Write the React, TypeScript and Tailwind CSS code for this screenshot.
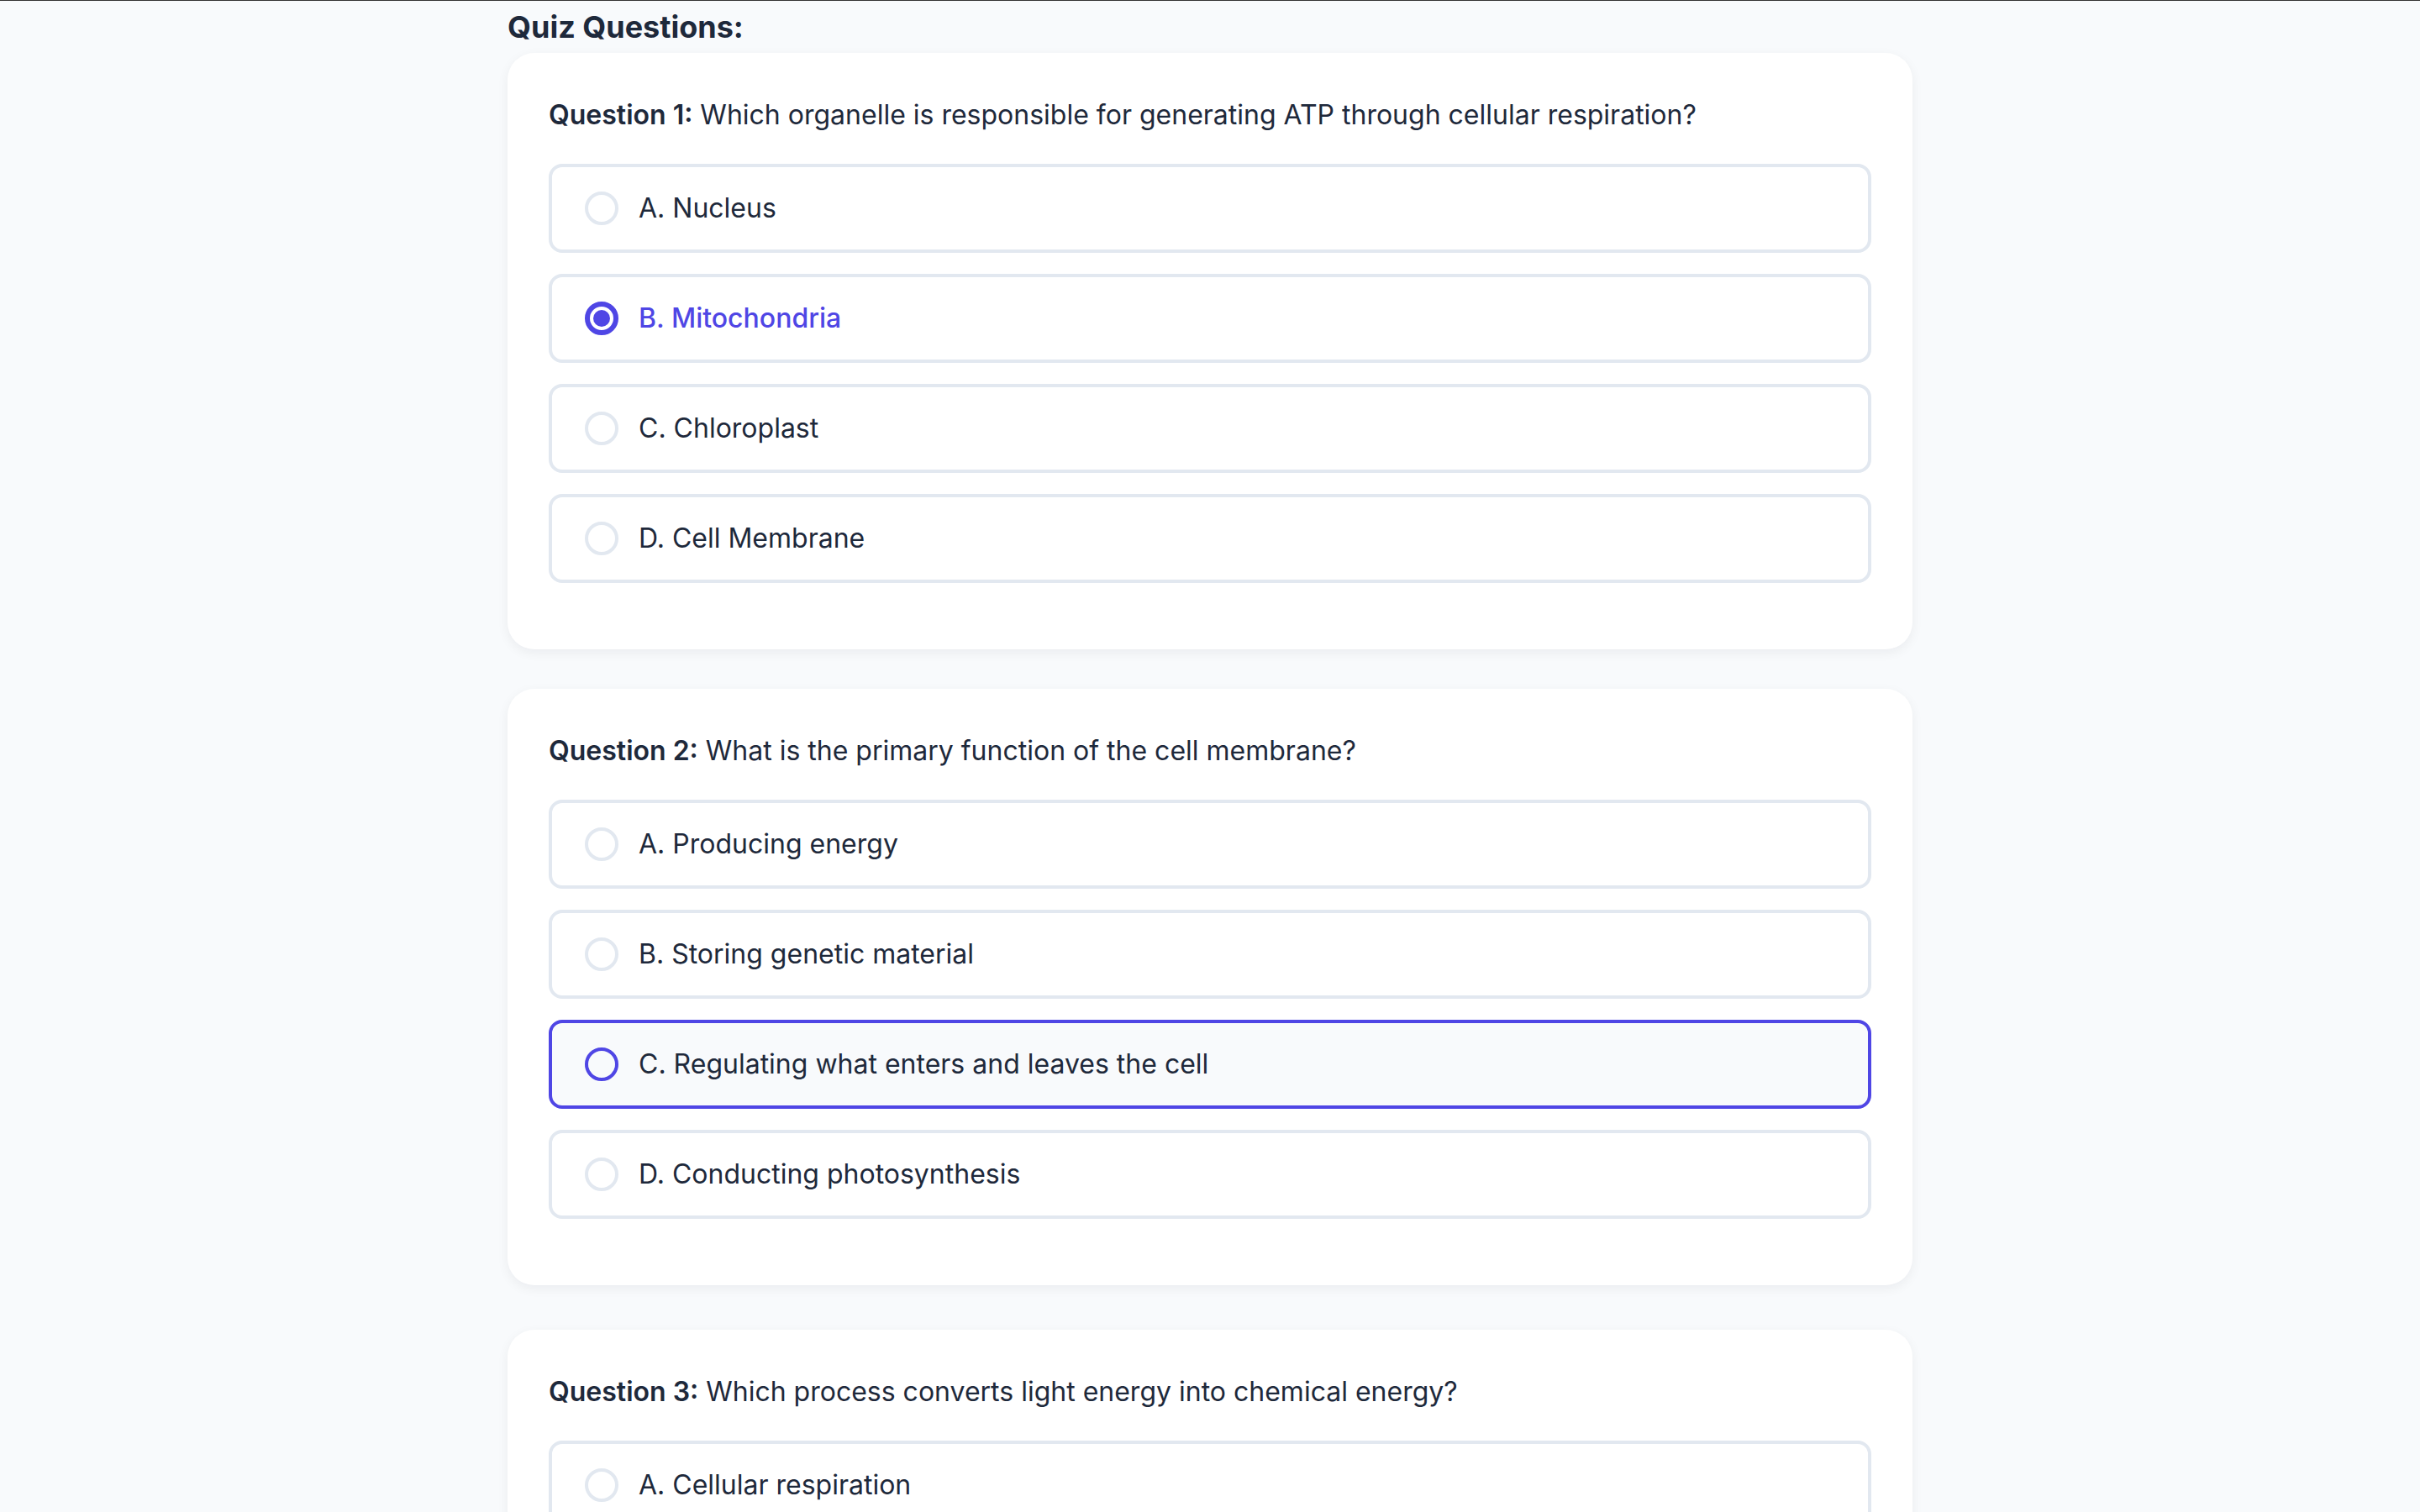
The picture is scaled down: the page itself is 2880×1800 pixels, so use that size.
import { useState } from "react";

type Question = {
  id: number;
  text: string;
  options: string[];
};

const questions: Question[] = [
  {
    id: 1,
    text: "Which organelle is responsible for generating ATP through cellular respiration?",
    options: ["A. Nucleus", "B. Mitochondria", "C. Chloroplast", "D. Cell Membrane"],
  },
  {
    id: 2,
    text: "What is the primary function of the cell membrane?",
    options: [
      "A. Producing energy",
      "B. Storing genetic material",
      "C. Regulating what enters and leaves the cell",
      "D. Conducting photosynthesis",
    ],
  },
  {
    id: 3,
    text: "Which process converts light energy into chemical energy?",
    options: ["A. Cellular respiration", "B. Photosynthesis", "C. Fermentation", "D. Glycolysis"],
  },
];

// spacing below each card (taken from the screenshot)
const cardGaps = ["mb-[47px]", "mb-[53px]", "mb-[48px]"];

function RadioDot({ selected, focused }: { selected: boolean; focused: boolean }) {
  if (selected) {
    return (
      <div className="w-[40px] h-[40px] shrink-0 rounded-full border-[6px] border-[#4f46e5] flex items-center justify-center">
        <div className="w-[20px] h-[20px] rounded-full bg-[#4f46e5]" />
      </div>
    );
  }
  return (
    <div
      className={
        focused
          ? "w-[40px] h-[40px] shrink-0 rounded-full border-[4px] border-[#4f46e5]"
          : "w-[40px] h-[40px] shrink-0 rounded-full border-[4px] border-[#e2e8f0]"
      }
    />
  );
}

export default function App() {
  const [answers, setAnswers] = useState<Record<number, number>>({ 1: 1 });
  const [hovered] = useState<{ q: number; o: number }>({ q: 2, o: 2 });

  return (
    <div className="min-h-screen bg-[#f8fafc] font-['Inter',sans-serif] text-[#1e293b]">
      <div className="h-px bg-[#333333]" />

      <main className="w-[1672px] mx-auto">
        <h2 className="pt-[4px] mb-[4px] text-[36px] leading-[54px] font-bold">Quiz Questions:</h2>

        {questions.map((q, qi) => (
          <div
            key={q.id}
            className={`bg-white rounded-[32px] shadow-[0_4px_14px_rgba(15,23,42,0.06)] px-[49px] pt-[50px] pb-[79px] ${cardGaps[qi]}`}
          >
            <p className="text-[32px] leading-[48px] mb-[34px]">
              <span className="font-semibold">Question {q.id}:</span> {q.text}
            </p>

            <div className="flex flex-col gap-[25px]">
              {q.options.map((opt, oi) => {
                const selected = answers[q.id] === oi;
                const focused = hovered.q === q.id && hovered.o === oi;
                return (
                  <button
                    key={opt}
                    onClick={() => setAnswers({ ...answers, [q.id]: oi })}
                    className={
                      focused
                        ? "h-[106px] w-full flex items-center gap-[24px] pl-[39px] rounded-[16px] border-[4px] border-[#4f46e5] bg-[#f8fafc] text-left"
                        : "h-[106px] w-full flex items-center gap-[24px] pl-[39px] rounded-[16px] border-[4px] border-[#e2e8f0] bg-white text-left"
                    }
                  >
                    <RadioDot selected={selected} focused={focused} />
                    <span
                      className={
                        selected
                          ? "text-[32px] leading-[48px] font-medium text-[#4f46e5]"
                          : "text-[32px] leading-[48px] text-[#1e293b]"
                      }
                    >
                      {opt}
                    </span>
                  </button>
                );
              })}
            </div>
          </div>
        ))}
      </main>
    </div>
  );
}
